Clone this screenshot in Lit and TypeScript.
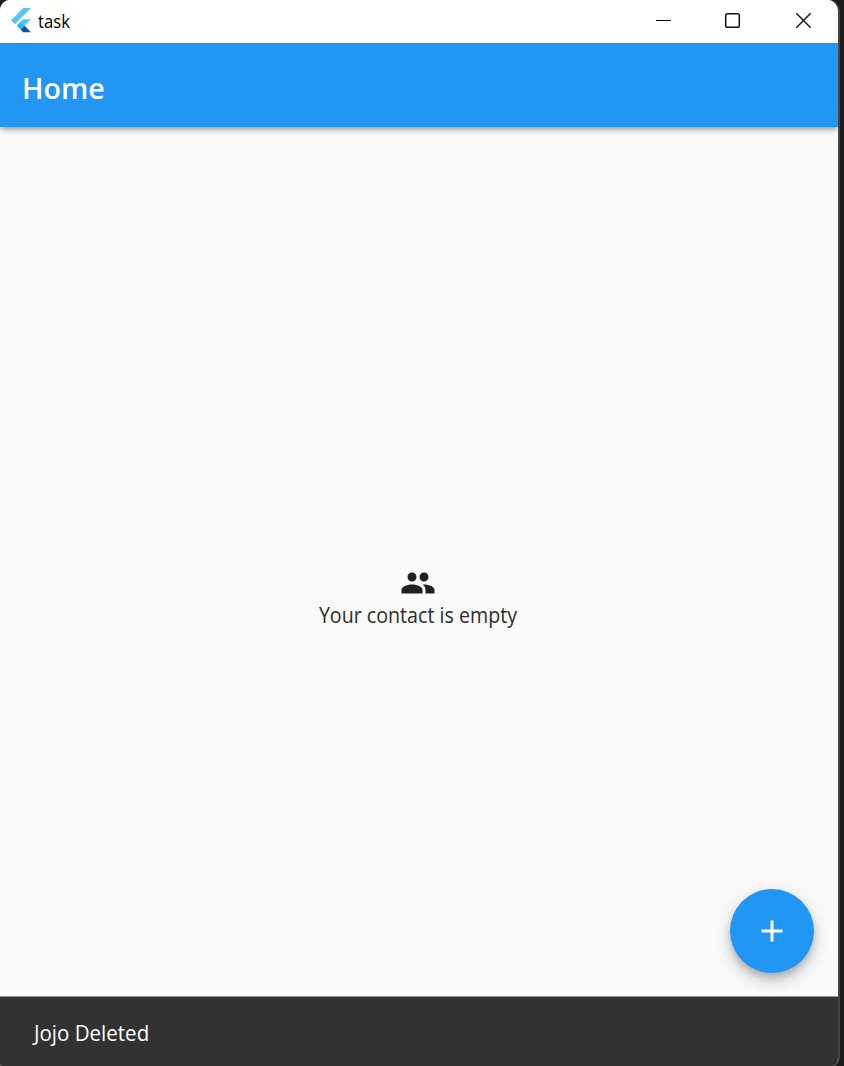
import { LitElement, html, css } from "lit";
import { customElement } from "lit/decorators.js";

@customElement("app-root")
export class AppRoot extends LitElement {
  static styles = css`
    :host {
      display: block;
      width: 844px;
      height: 1066px;
      overflow: hidden;
      background: #1a1a1a;
      font-family: "Open Sans", "Noto Sans", sans-serif;
    }
    .window {
      box-sizing: border-box;
      width: 840px;
      height: 1066px;
      border-right: 2px solid #444;
      border-radius: 10px 12px 8px 2px;
      overflow: hidden;
      display: flex;
      flex-direction: column;
      background: #fafafa;
    }
    svg { display: block; flex: none; }
    .titlebar {
      height: 43px;
      flex: none;
      display: flex;
      align-items: center;
      background: #fff;
      color: #000;
      z-index: 2;
    }
    .logo { margin: -2px 7px 0 11px; }
    .title {
      flex: 1;
      font-size: 18px;
      line-height: 24px;
      padding-bottom: 2px;
    }
    .title span, .appbar span, .message span, .snackbar span {
      display: inline-block;
      transform-origin: 0 50%;
      white-space: nowrap;
    }
    .title span { transform: scaleX(0.93); }
    .controls { display: flex; height: 43px; }
    .appbar {
      height: 84px;
      flex: none;
      box-sizing: border-box;
      padding: 4px 0 0 22px;
      display: flex;
      align-items: center;
      background: #2196f3;
      color: #fff;
      font-size: 29px;
      font-weight: 600;
      box-shadow: 0 3px 6px -1px rgba(0, 0, 0, 0.3), 0 1px 8px rgba(0, 0, 0, 0.2);
      z-index: 1;
    }
    .appbar span { transform: scaleX(0.985); }
    .body {
      flex: 1;
      position: relative;
      display: flex;
      flex-direction: column;
      align-items: center;
      justify-content: center;
      padding: 70px 2px 0 0;
      box-sizing: border-box;
    }
    .message {
      color: #2c2c2c;
      font-size: 21px;
      line-height: 28px;
    }
    .message span {
      transform-origin: 50% 50%;
      transform: scaleX(0.935);
    }
    .fab {
      position: absolute;
      right: 24px;
      bottom: 23.5px;
      width: 84px;
      height: 84px;
      padding: 0;
      border: 0;
      border-radius: 50%;
      display: grid;
      place-items: center;
      background: #2196f3;
      box-shadow: 0 5px 8px -1px rgba(0, 0, 0, 0.2), 0 9px 15px rgba(0, 0, 0, 0.14),
        0 2px 27px rgba(0, 0, 0, 0.06);
    }
    .snackbar {
      height: 70px;
      flex: none;
      box-sizing: border-box;
      border-top: 1px solid #929292;
      padding: 3px 0 0 34px;
      display: flex;
      align-items: center;
      background: #323232;
      color: #fff;
      font-size: 21px;
      z-index: 1;
    }
    .snackbar span { transform: scaleX(0.977); }
  `;

  render() {
    return html`
      <div class="window">
        <div class="titlebar">
          <svg class="logo" width="20" height="25" viewBox="0 0 20 25">
            <path fill="#54c5f8" d="M12.2 0H20L3.9 16.2 0 12.3Z" />
            <path fill="#54c5f8" d="M12.2 11.2H20L13.5 17.7 9.7 13.8Z" />
            <path fill="#29b6f6" d="M5.7 17.8 9.7 13.8 13.6 17.8 9.7 21.8Z" />
            <path fill="#01579b" d="M9.7 21.8 13.6 17.8 20 24.3H12.2Z" />
          </svg>
          <div class="title"><span>task</span></div>
          <svg class="controls" width="198" height="43" viewBox="0 0 198 43" fill="none" stroke="#111" stroke-width="1.4">
            <path stroke="#000" stroke-width="1" d="M16 20.5H31" />
            <rect x="85.7" y="13.7" width="13.6" height="13.6" rx="1.8" stroke-width="1.5" />
            <path d="M156.3 13.3 170.7 27.7M170.7 13.3 156.3 27.7" />
          </svg>
        </div>
        <div class="appbar"><span class="heading">Home</span></div>
        <div class="body">
          <svg width="36" height="36" viewBox="0 0 24 24" fill="#212121">
            <path d="M16 11c1.66 0 2.99-1.34 2.99-3S17.66 5 16 5s-3 1.34-3 3 1.34 3 3 3zm-8 0c1.66 0 2.99-1.34 2.99-3S9.66 5 8 5 5 6.340 5 8s1.340 3 3 3zm0 2c-2.330 0-7 1.170-7 3.500V19h14v-2.500c0-2.330-4.670-3.500-7-3.500zm8 0c-.29 0-.62.020-.97.050 1.160.84 1.970 1.970 1.970 3.450V19h6v-2.500c0-2.330-4.670-3.500-7-3.500z" />
          </svg>
          <div class="message"><span>Your contact is empty</span></div>
          <button class="fab" aria-label="Add">
            <svg width="36" height="36" viewBox="0 0 24 24" fill="#fff">
              <path d="M19 13h-6v6h-2v-6H5v-2h6V5h2v6h6v2z" />
            </svg>
          </button>
        </div>
        <div class="snackbar"><span>Jojo Deleted</span></div>
      </div>
    `;
  }
}
